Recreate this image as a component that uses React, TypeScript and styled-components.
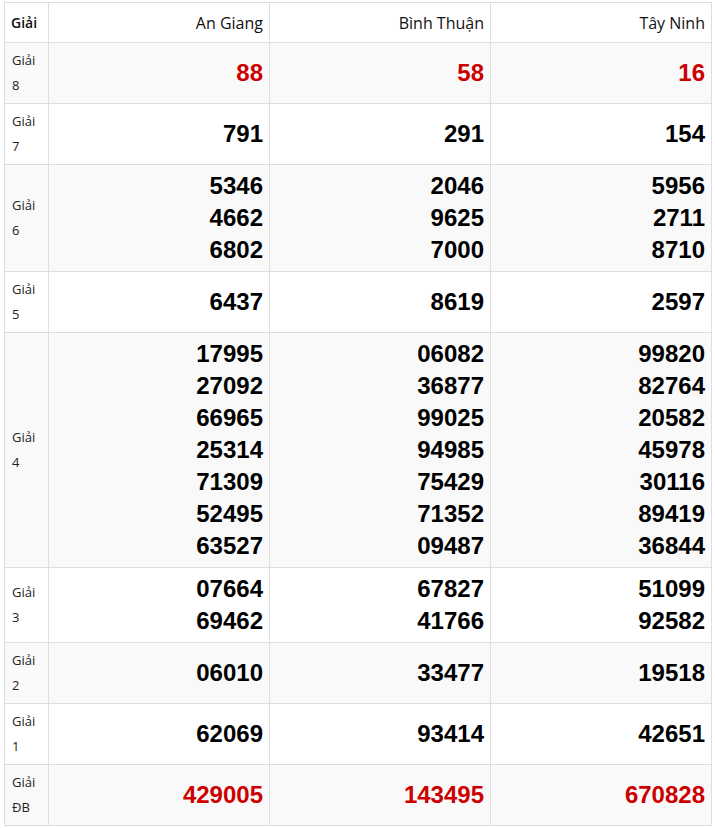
import React from "react";
import styled, { createGlobalStyle } from "styled-components";

type Row = { label: string[]; values: string[][]; red?: boolean };

const provinces = ["An Giang", "Bình Thuận", "Tây Ninh"];

const rows: Row[] = [
  { label: ["Giải", "8"], values: [["88"], ["58"], ["16"]], red: true },
  { label: ["Giải", "7"], values: [["791"], ["291"], ["154"]] },
  {
    label: ["Giải", "6"],
    values: [
      ["5346", "4662", "6802"],
      ["2046", "9625", "7000"],
      ["5956", "2711", "8710"],
    ],
  },
  { label: ["Giải", "5"], values: [["6437"], ["8619"], ["2597"]] },
  {
    label: ["Giải", "4"],
    values: [
      ["17995", "27092", "66965", "25314", "71309", "52495", "63527"],
      ["06082", "36877", "99025", "94985", "75429", "71352", "09487"],
      ["99820", "82764", "20582", "45978", "30116", "89419", "36844"],
    ],
  },
  {
    label: ["Giải", "3"],
    values: [
      ["07664", "69462"],
      ["67827", "41766"],
      ["51099", "92582"],
    ],
  },
  { label: ["Giải", "2"], values: [["06010"], ["33477"], ["19518"]] },
  { label: ["Giải", "1"], values: [["62069"], ["93414"], ["42651"]] },
  { label: ["Giải", "ĐB"], values: [["429005"], ["143495"], ["670828"]], red: true },
];

const GlobalStyle = createGlobalStyle`
  body {
    margin: 0;
    background: #ffffff;
    font-family: "Open Sans", "Noto Sans", sans-serif;
    color: #212529;
  }
`;

const Page = styled.div`
  padding: 2px 0 0 4px;
`;

const Table = styled.table`
  width: 708px;
  border-collapse: collapse;
  table-layout: fixed;
`;

const HeadCell = styled.th<{ $first?: boolean }>`
  border: 1px solid #dedede;
  height: 39px;
  padding: 0 6px;
  text-align: ${({ $first }) => ($first ? "left" : "right")};
  font-size: ${({ $first }) => ($first ? "14px" : "16px")};
  font-weight: ${({ $first }) => ($first ? 600 : 400)};
  color: #111;
  vertical-align: middle;
`;

const BodyRow = styled.tr<{ $striped: boolean }>`
  background: ${({ $striped }) => ($striped ? "#f9f9f9" : "#ffffff")};
`;

const LabelCell = styled.td`
  border: 1px solid #dedede;
  padding: 5px 6px 5px 7px;
  font-size: 13px;
  line-height: 25px;
  color: #222;
  vertical-align: middle;
`;

const NumberCell = styled.td<{ $red?: boolean }>`
  border: 1px solid #dedede;
  padding: 5px 6px;
  text-align: right;
  vertical-align: middle;
  font-family: "Liberation Sans", Arial, sans-serif;
  font-weight: 700;
  font-size: 24px;
  line-height: 32px;
  color: ${({ $red }) => ($red ? "#cc0000" : "#000000")};
`;

const Num = styled.div`
  white-space: nowrap;
`;

export default function App() {
  return (
    <Page>
      <GlobalStyle />
      <Table>
        <colgroup>
          <col style={{ width: 44 }} />
          <col />
          <col />
          <col />
        </colgroup>
        <thead>
          <tr>
            <HeadCell $first>Giải</HeadCell>
            {provinces.map((p) => (
              <HeadCell key={p}>{p}</HeadCell>
            ))}
          </tr>
        </thead>
        <tbody>
          {rows.map((row, i) => (
            <BodyRow key={i} $striped={i % 2 === 0}>
              <LabelCell>
                {row.label[0]}
                <br />
                {row.label[1]}
              </LabelCell>
              {row.values.map((vals, j) => (
                <NumberCell key={j} $red={row.red}>
                  {vals.map((v, k) => (
                    <Num key={k}>{v}</Num>
                  ))}
                </NumberCell>
              ))}
            </BodyRow>
          ))}
        </tbody>
      </Table>
    </Page>
  );
}
